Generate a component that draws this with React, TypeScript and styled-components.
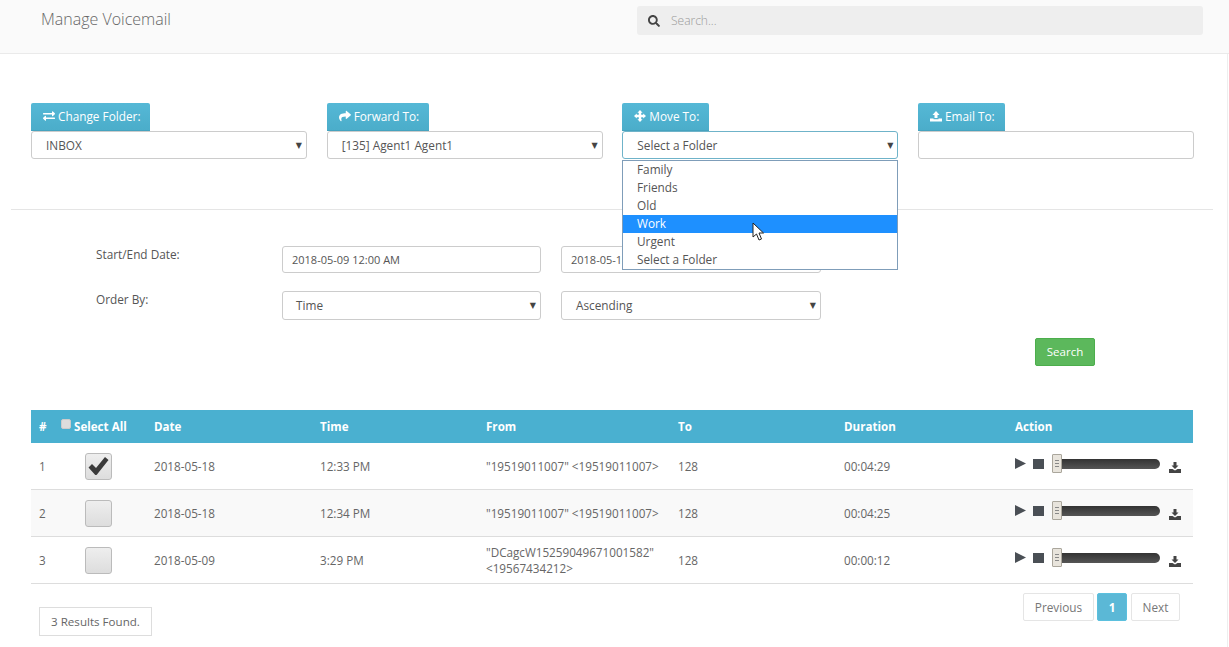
import React from "react";
import styled, { createGlobalStyle } from "styled-components";
import { FaSearch, FaExchangeAlt, FaShare } from "react-icons/fa";

const Global = createGlobalStyle`
  html, body { margin: 0; padding: 0; height: 100%; overflow: hidden; background: #fff; }
  body { font-family: "Open Sans", "Liberation Sans", sans-serif; font-size: 12px; color: #666; }
  * { box-sizing: border-box; }
`;

const Page = styled.div`
  width: 1229px;
  height: 647px;
  overflow: hidden;
  position: relative;
`;
const Header = styled.header`
  height: 54px;
  background: #fafafa;
  border-bottom: 1px solid #eaeaea;
  display: flex;
  align-items: flex-start;
  justify-content: space-between;
  padding: 6px 26px 0 41px;
`;
const Title = styled.h1`
  margin: 2px 0 0;
  font-size: 16px;
  line-height: 22px;
  font-weight: 300;
  color: #666;
`;
const SearchBox = styled.div`
  width: 566px;
  height: 29px;
  background: #eee;
  border-radius: 3px;
  display: flex;
  align-items: center;
  gap: 11px;
  padding: 0 11px;
  color: #444;
  svg { width: 12px; height: 12px; }
`;
const SearchHint = styled.span`
  color: #999;
  font-size: 12px;
  font-weight: 300;
`;
const FolderRow = styled.section`
  display: grid;
  grid-template-columns: repeat(4, 276px);
  column-gap: 19.67px;
  padding: 49px 0 0 31px;
  height: 155px;
  position: relative;
`;
const Field = styled.div`
  display: flex;
  flex-direction: column;
  align-items: flex-start;
`;
const InfoTag = styled.span`
  height: 28px;
  padding: 0 10px 2px 12px;
  display: inline-flex;
  align-items: center;
  gap: 3px;
  background: linear-gradient(#55b8d6, #4badca);
  border-bottom: 1px solid #46a3bf;
  border-radius: 2px 2px 0 0;
  color: #fff;
  font-size: 11.8px;
  svg { width: 12px; height: 12px; }
`;
const SelectBox = styled.div<{ $h?: number; $focus?: boolean; $pad?: number }>`
  width: 100%;
  height: ${(p) => p.$h ?? 28}px;
  border: 1px solid ${(p) => (p.$focus ? "#6fb3c9" : "#ccc")};
  border-radius: 3px;
  background: #fff;
  display: flex;
  align-items: center;
  justify-content: space-between;
  padding: 0 4px ${(p) => (p.$h ? 1 : 0)}px ${(p) => p.$pad ?? 14}px;
  font-size: 11.8px;
  color: #555;
`;
const Arrow = styled.span`
  font-size: 8px;
  color: #444;
  font-family: "DejaVu Sans", sans-serif;
`;
const TextInput = styled.div<{ $h?: number }>`
  width: 100%;
  height: ${(p) => p.$h ?? 28}px;
  border: 1px solid #ccc;
  border-radius: 3px;
  background: #fff;
  display: flex;
  align-items: center;
  padding: 0 9px;
  font-size: 11px;
  color: #555;
`;
const Menu = styled.ul`
  position: absolute;
  left: 622px;
  top: 106px;
  width: 276px;
  height: 110px;
  margin: 0;
  padding: 0;
  list-style: none;
  background: #fff;
  border: 1px solid #7f9db9;
  z-index: 5;
`;
const MenuItem = styled.li<{ $active?: boolean }>`
  height: 18px;
  line-height: 17px;
  padding-left: 14px;
  font-size: 11.8px;
  background: ${(p) => (p.$active ? "#1e90ff" : "transparent")};
  color: ${(p) => (p.$active ? "#fff" : "#555")};
`;
const Cursor = styled.svg`
  position: absolute;
  left: 752px;
  top: 222px;
  z-index: 6;
`;
const Rule = styled.hr`
  margin: 0 16px 0 11px;
  border: 0;
  border-top: 1px solid #e5e5e5;
`;
const FilterGrid = styled.section`
  display: grid;
  grid-template-columns: 166px 259px 260px;
  grid-template-rows: 27px 29px;
  column-gap: 20px;
  row-gap: 18px;
  padding: 36px 0 0 96px;
`;
const FilterLabel = styled.label`
  font-size: 11.8px;
  line-height: 16px;
  color: #555;
`;
const SearchRow = styled.div`
  display: flex;
  justify-content: flex-end;
  padding: 18px 134px 0 0;
`;
const SearchButton = styled.button`
  width: 60px;
  height: 28px;
  background: #5cb85c;
  border: 1px solid #4cae4c;
  border-radius: 2px;
  color: #fff;
  font: 11.5px "Open Sans", sans-serif;
  padding: 0 0 2px;
`;
const Table = styled.table`
  margin: 44px 0 0 31px;
  width: 1162px;
  table-layout: fixed;
  border-collapse: separate;
  border-spacing: 0;
`;
const Th = styled.th<{ $w: number }>`
  width: ${(p) => p.$w}px;
  height: 33px;
  background: #4ab0d0;
  color: #fff;
  text-align: left;
  font-size: 11.6px;
  font-weight: 700;
  padding: 0 8px;
`;
const Td = styled.td<{ $alt?: boolean }>`
  height: 47px;
  font-size: 11.7px;
  line-height: 16px;
  color: #666;
  padding: 0 8px;
  background: ${(p) => (p.$alt ? "#f9f9f9" : "#fff")};
  border-bottom: 1px solid #ddd;
`;
const MiniCheck = styled.span`
  display: inline-block;
  width: 10px;
  height: 10px;
  margin: 0 3px 0 -1px;
  background: #ddd;
  border: 1px solid #ccc;
  border-radius: 2px;
  vertical-align: 2px;
`;
const BigCheck = styled.span`
  margin-left: 23px;
  width: 27px;
  height: 27px;
  display: flex;
  align-items: center;
  justify-content: center;
  background: linear-gradient(#eee, #ddd);
  border: 1px solid #bbb;
  border-radius: 3px;
  color: #3a3a3a;
`;
const CheckMark = styled.svg`
  width: 21px;
  height: 20px;
`;
const Player = styled.div`
  display: flex;
  align-items: center;
  color: #444;
  height: 30px;
  margin-top: -5px;
`;
const PlayIcon = styled.svg`
  width: 11px;
  height: 11px;
  margin-right: 7px;
`;
const StopIcon = styled.span`
  width: 11px;
  height: 10px;
  margin-right: 8px;
  background: #4a4f55;
`;
const Handle = styled.span`
  width: 10px;
  height: 19px;
  background: #e8e4dc;
  border: 1px solid #aaa69c;
  border-radius: 1px;
  display: flex;
  flex-direction: column;
  align-items: center;
  justify-content: center;
  gap: 2px;
  i { display: block; width: 4px; height: 1px; background: #888; }
`;
const Track = styled.span`
  width: 98px;
  height: 10px;
  background: linear-gradient(#333, #555);
  border-radius: 0 5px 5px 0;
`;
const DownloadGlyph = styled.svg`
  width: 12px;
  height: 11px;
  margin: 7px 0 0 9px;
`;
const Footer = styled.footer`
  display: flex;
  justify-content: space-between;
  align-items: flex-start;
  padding: 9px 49px 0 39px;
`;
const ResultCount = styled.div`
  margin-top: 14px;
  width: 113px;
  height: 29px;
  border: 1px solid #ddd;
  display: flex;
  align-items: center;
  justify-content: center;
  font-size: 11.6px;
  color: #666;
`;
const Pager = styled.nav`
  display: flex;
  gap: 3px;
`;
const PageLink = styled.span<{ $w: number; $active?: boolean; $gap?: number }>`
  width: ${(p) => p.$w}px;
  height: 28px;
  margin-left: ${(p) => p.$gap ?? 0}px;
  display: flex;
  align-items: center;
  justify-content: center;
  border: 1px solid ${(p) => (p.$active ? "#5bc0de" : "#e5e5e5")};
  border-radius: 2px;
  background: ${(p) => (p.$active ? "#5bb8d6" : "#fff")};
  color: ${(p) => (p.$active ? "#fff" : "#777")};
  font-weight: ${(p) => (p.$active ? 700 : 400)};
  font-size: 11.8px;
`;
const EdgeLine = styled.div`
  position: absolute;
  left: 1227px;
  top: 54px;
  bottom: 0;
  width: 1px;
  background: #eee;
`;

const MoveGlyph = () => (
  <svg viewBox="0 0 12 12" fill="currentColor">
    <path d="M6 0 L8.6 2.8 H7.2 V4.8 H9.2 V3.4 L12 6 L9.2 8.6 V7.2 H7.2 V9.2 H8.6 L6 12 L3.4 9.2 H4.8 V7.2 H2.8 V8.6 L0 6 L2.8 3.4 V4.8 H4.8 V2.8 H3.4 Z" />
  </svg>
);
const UploadGlyph = () => (
  <svg viewBox="0 0 12 12" fill="currentColor">
    <path d="M6 1 L9.5 5 H7.5 V8 H4.5 V5 H2.5 Z" />
    <path d="M0 8.5 H3.5 V9.2 H8.5 V8.5 H12 V11.5 H0 Z" />
  </svg>
);
const Download = () => (
  <DownloadGlyph viewBox="0 0 12 11" fill="currentColor">
    <path d="M4.5 0 H7.5 V3.5 H9.5 L6 7 L2.5 3.5 H4.5 Z" />
    <path d="M0 7 H3.5 L6 8.5 L8.5 7 H12 V11 H0 Z" />
  </DownloadGlyph>
);

const rows = [
  { n: 1, checked: true, date: "2018-05-18", time: "12:33 PM", from: '"19519011007" <19519011007>', dur: "00:04:29" },
  { n: 2, checked: false, date: "2018-05-18", time: "12:34 PM", from: '"19519011007" <19519011007>', dur: "00:04:25" },
  { n: 3, checked: false, date: "2018-05-09", time: "3:29 PM", from: '"DCagcW15259049671001582" <19567434212>', dur: "00:00:12" },
];

export default function App() {
  return (
    <Page>
      <Global />
      <Header>
        <Title>Manage Voicemail</Title>
        <SearchBox>
          <FaSearch />
          <SearchHint>Search...</SearchHint>
        </SearchBox>
      </Header>
      <FolderRow>
        <Field>
          <InfoTag><FaExchangeAlt />Change Folder:</InfoTag>
          <SelectBox>INBOX<Arrow>▼</Arrow></SelectBox>
        </Field>
        <Field>
          <InfoTag><FaShare />Forward To:</InfoTag>
          <SelectBox>[135] Agent1 Agent1<Arrow>▼</Arrow></SelectBox>
        </Field>
        <Field>
          <InfoTag><MoveGlyph />Move To:</InfoTag>
          <SelectBox $focus>Select a Folder<Arrow>▼</Arrow></SelectBox>
        </Field>
        <Field>
          <InfoTag><UploadGlyph />Email To:</InfoTag>
          <TextInput />
        </Field>
        <Menu>
          <MenuItem>Family</MenuItem>
          <MenuItem>Friends</MenuItem>
          <MenuItem>Old</MenuItem>
          <MenuItem $active>Work</MenuItem>
          <MenuItem>Urgent</MenuItem>
          <MenuItem>Select a Folder</MenuItem>
        </Menu>
      </FolderRow>
      <Cursor width="13" height="20" viewBox="0 0 13 20">
        <path d="M1 1 L1 15 L4.5 12 L7 18 L9.5 17 L7 11 L11.5 11 Z" fill="#fff" stroke="#222" strokeWidth="1" />
      </Cursor>
      <Rule />
      <FilterGrid>
        <FilterLabel>Start/End Date:</FilterLabel>
        <TextInput $h={27}>2018-05-09 12:00 AM</TextInput>
        <TextInput $h={27}>2018-05-18 11:59 PM</TextInput>
        <FilterLabel>Order By:</FilterLabel>
        <SelectBox $h={29} $pad={13}>Time<Arrow>▼</Arrow></SelectBox>
        <SelectBox $h={29}>Ascending<Arrow>▼</Arrow></SelectBox>
      </FilterGrid>
      <SearchRow>
        <SearchButton>Search</SearchButton>
      </SearchRow>
      <Table>
        <thead>
          <tr>
            <Th $w={23}>#</Th>
            <Th $w={92}><MiniCheck />Select All</Th>
            <Th $w={166}>Date</Th>
            <Th $w={166}>Time</Th>
            <Th $w={192}>From</Th>
            <Th $w={166}>To</Th>
            <Th $w={171}>Duration</Th>
            <Th $w={186}>Action</Th>
          </tr>
        </thead>
        <tbody>
          {rows.map((r) => {
            const alt = r.n === 2;
            return (
              <tr key={r.n}>
                <Td $alt={alt}>{r.n}</Td>
                <Td $alt={alt}>
                  <BigCheck>
                    {r.checked && (
                      <CheckMark viewBox="0 0 21 20" fill="currentColor">
                        <path d="M0.5 11.5 L4 8 L8 12 L17 1 L20.5 4 L9 18.5 C8.3 19.3 7.5 19.3 6.8 18.6 Z" />
                      </CheckMark>
                    )}
                  </BigCheck>
                </Td>
                <Td $alt={alt}>{r.date}</Td>
                <Td $alt={alt}>{r.time}</Td>
                <Td $alt={alt}>{r.from}</Td>
                <Td $alt={alt}>128</Td>
                <Td $alt={alt}>{r.dur}</Td>
                <Td $alt={alt}>
                  <Player>
                    <PlayIcon viewBox="0 0 11 11"><path d="M0 0 L11 5.5 L0 11 Z" fill="#4a4f55" /></PlayIcon>
                    <StopIcon />
                    <Handle><i /><i /><i /></Handle>
                    <Track />
                    <Download />
                  </Player>
                </Td>
              </tr>
            );
          })}
        </tbody>
      </Table>
      <Footer>
        <ResultCount>3 Results Found.</ResultCount>
        <Pager>
          <PageLink $w={71}>Previous</PageLink>
          <PageLink $w={30} $active>1</PageLink>
          <PageLink $w={49} $gap={1}>Next</PageLink>
        </Pager>
      </Footer>
      <EdgeLine />
    </Page>
  );
}
